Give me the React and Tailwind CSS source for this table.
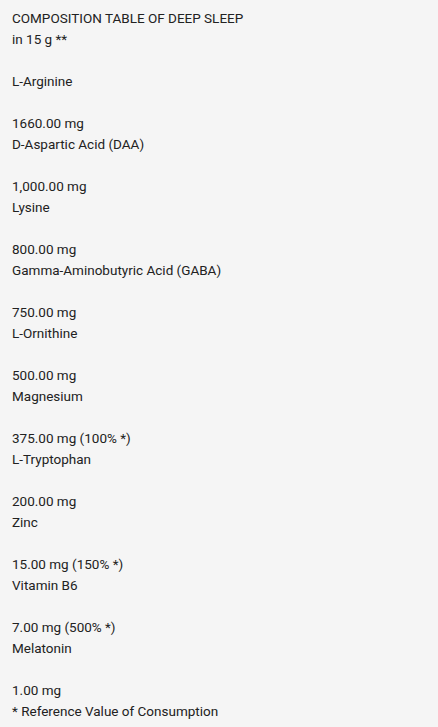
const rows = [
  ["COMPOSITION TABLE OF DEEP SLEEP", "in 15 g **"],
  ["L-Arginine"],
  ["1660.00 mg", "D-Aspartic Acid (DAA)"],
  ["1,000.00 mg", "Lysine"],
  ["800.00 mg", "Gamma-Aminobutyric Acid (GABA)"],
  ["750.00 mg", "L-Ornithine"],
  ["500.00 mg", "Magnesium"],
  ["375.00 mg (100% *)", "L-Tryptophan"],
  ["200.00 mg", "Zinc"],
  ["15.00 mg (150% *)", "Vitamin B6"],
  ["7.00 mg (500% *)", "Melatonin"],
  ["1.00 mg", "* Reference Value of Consumption"],
];

function App() {
  return (
    <div className="w-full min-h-screen bg-[#f5f5f5] px-3 pt-[8px] font-['Roboto',sans-serif] text-[13.5px] leading-[21px] text-[#222]">
      <div className="flex flex-col gap-[21px]">
        {rows.map((group, i) => (
          <p key={i}>
            {group.map((line, j) => (
              <span key={j} className="block">
                {line}
              </span>
            ))}
          </p>
        ))}
      </div>
    </div>
  );
}

export default App;
